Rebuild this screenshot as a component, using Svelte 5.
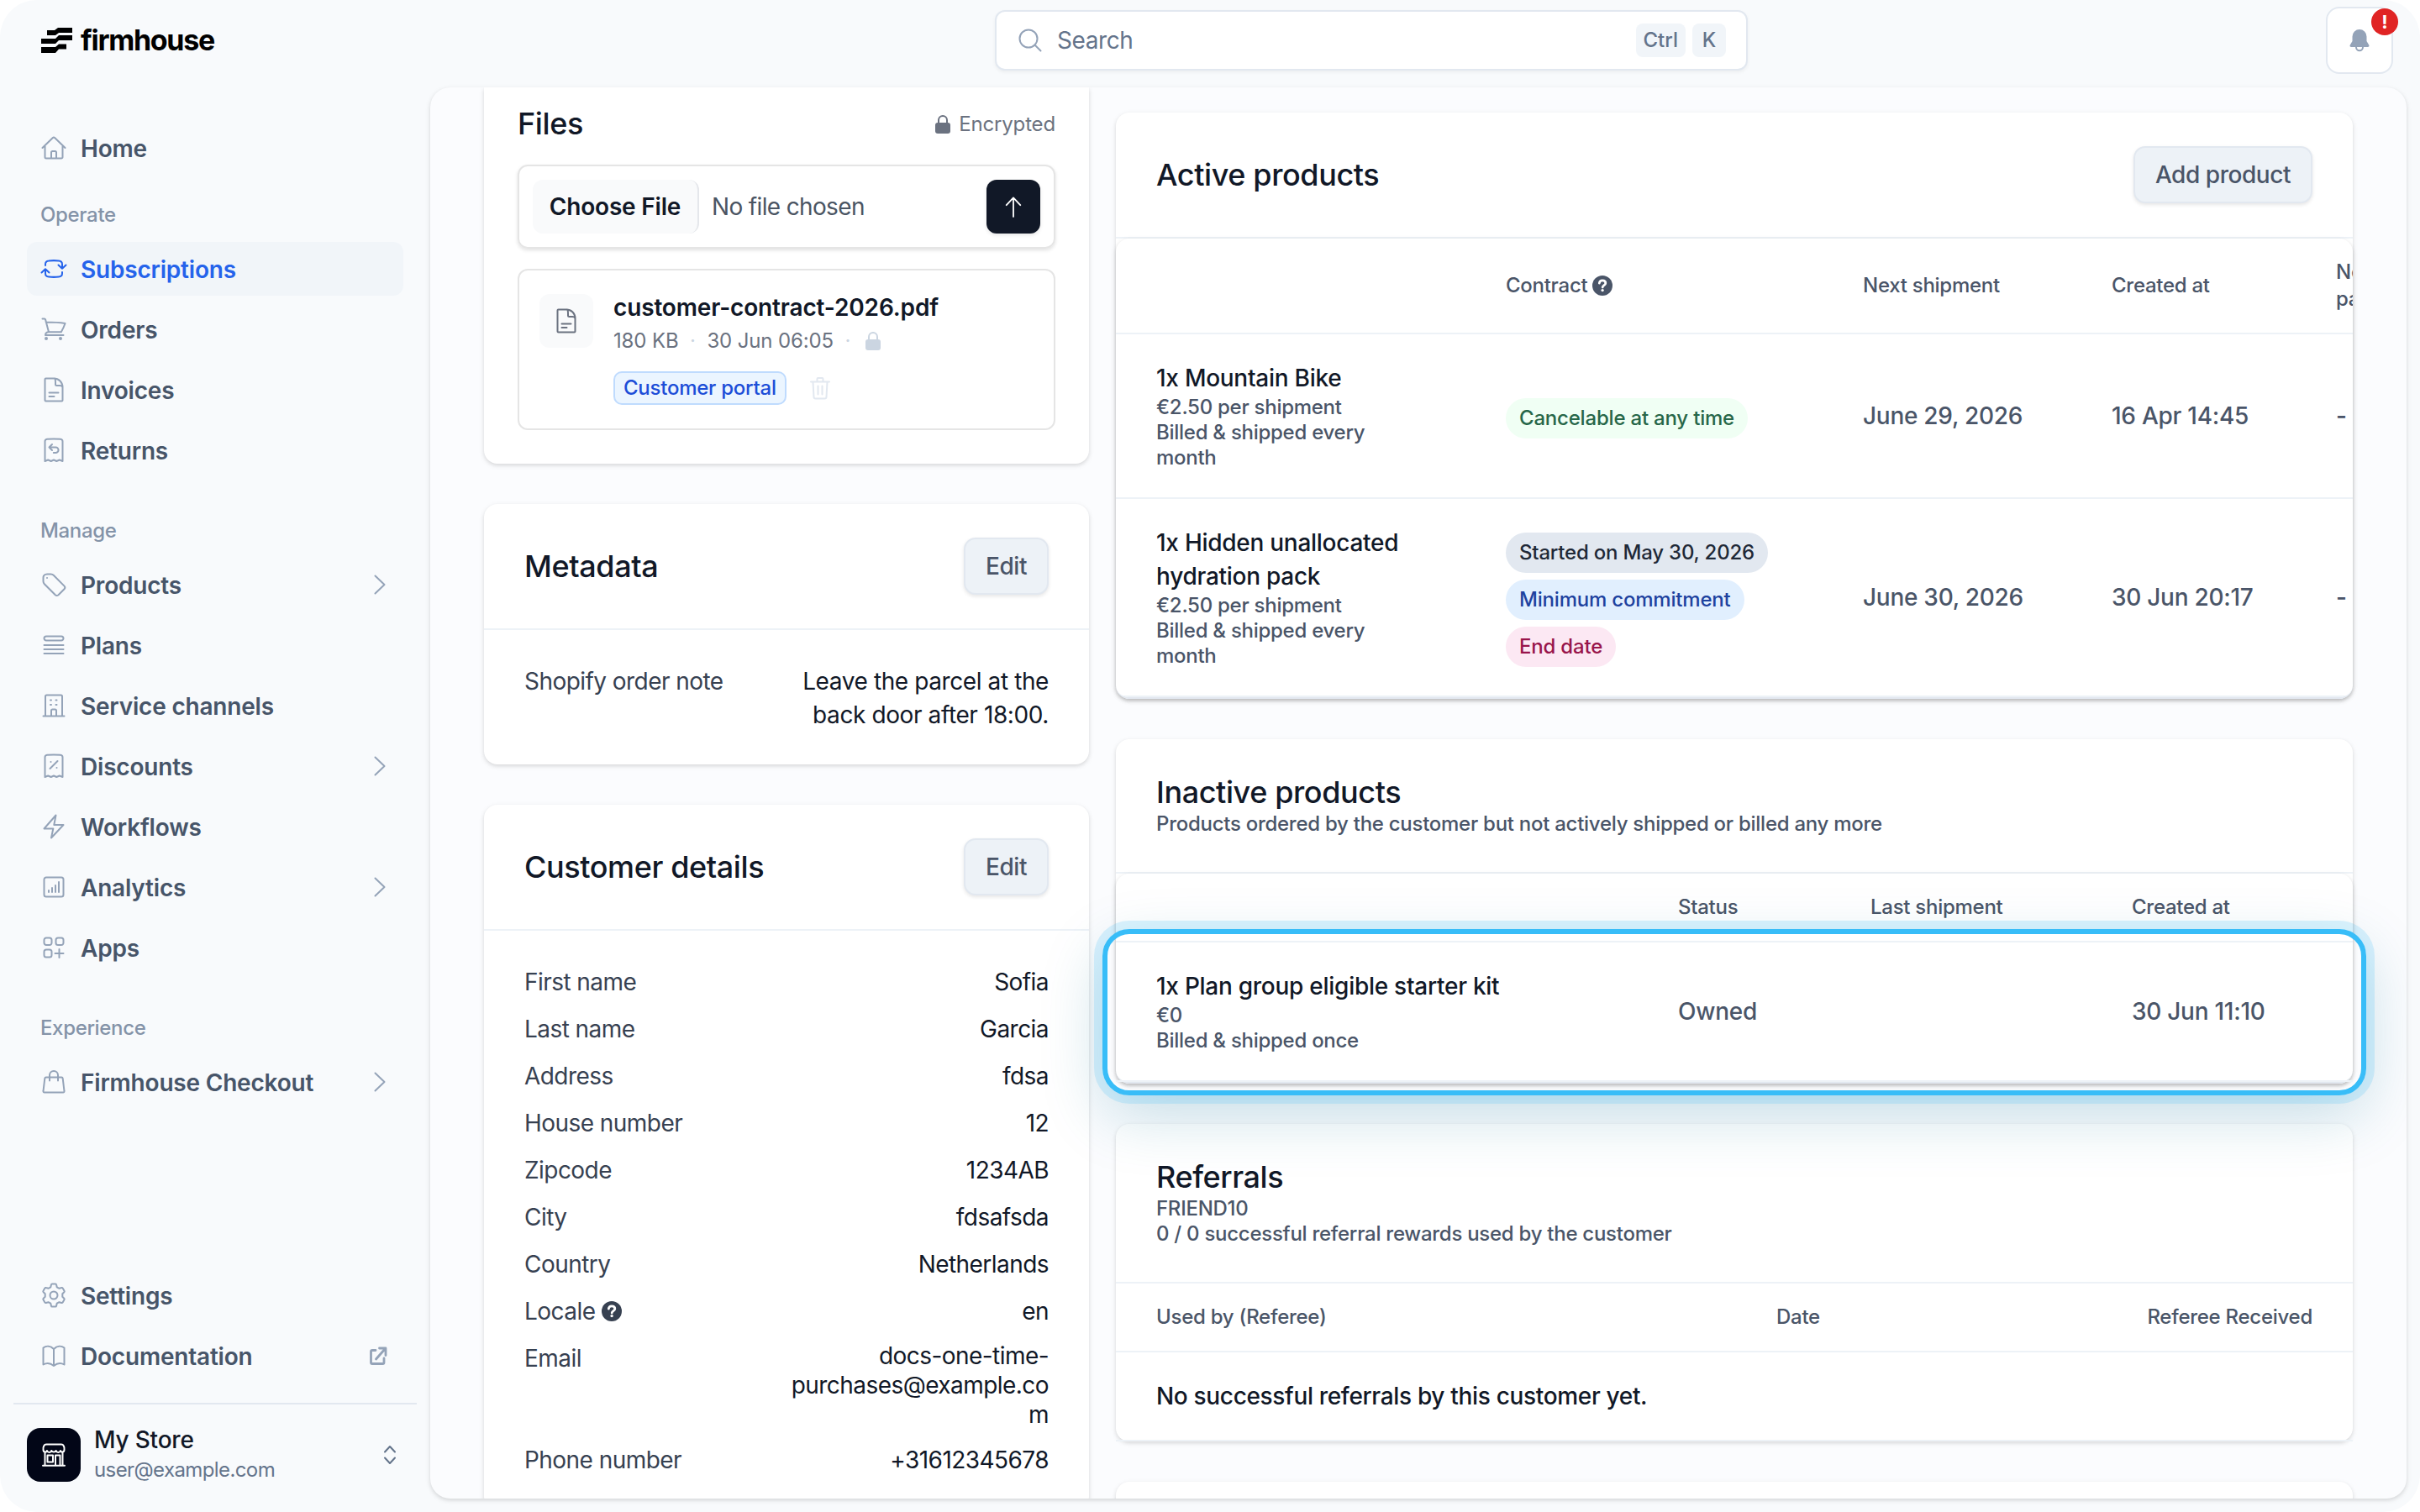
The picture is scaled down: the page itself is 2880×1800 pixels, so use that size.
<script>
  const icons = {
    home: "M2.5 16 14.6 4.2a2 2 0 0 1 2.8 0L29.5 16M5.5 13.2V27A1.5 1.5 0 0 0 7 28.5h18a1.5 1.5 0 0 0 1.5-1.5V13.2M13 28v-6.5a1.5 1.5 0 0 1 1.5-1.5h3a1.5 1.5 0 0 1 1.5 1.5V28",
    sync: "M6 12v-1.5c0-3 1.8-3.8 4-4 4-.5 8-.5 12 0 2.5.3 4 1.2 4 4v5.3M21.5 11.5 26 15.8l4.5-4.3M26 20v1.5c0 3-1.5 3.8-4 4-4 .5-8 .5-12 0-2.5-.2-4-1-4-4v-5M1.5 20.5 6 16.2l4.5 4.3",
    cart: "M2.5 3.500h2.300c.7 0 1.200.5 1.300 1.100L10 19.300M6.700 7.500c8 0 15.500.3 22.800 1.500-1.200 3.600-2.800 7-4.700 10.300H10a4 4 0 0 0-4 3.700h21.500M8 27a1 1 0 1 1-2 0 1 1 0 0 1 2 0ZM25 27a1 1 0 1 1-2 0 1 1 0 0 1 2 0Z",
    doc: "M16 2.500H6.500a1 1 0 0 0-1 1v25a1 1 0 0 0 1 1h19a1 1 0 0 0 1-1V13C26.500 7 22 2.500 16 2.500ZM17 2.600c1.200.8 1 2.200 1 6.900a1.500 1.500 0 0 0 1.500 1.500h3.500c2 0 3 .5 3.500 2M10.500 19.500h11M10.500 24h6",
    returns: "M5.500 5.500c0-2 1-2.500 2.500-2.700 5.300-.5 10.700-.5 16 0 1.500.2 2.500.7 2.500 2.700V29l-3.700-1.500-3.500 1.500-3.300-1.500-3.300 1.500-3.500-1.500L5.500 29ZM14 9l-3.500 3.500L14 16M10.500 12.500h7.800a3.200 3.200 0 0 1 0 6.500h-2.500",
    tag: "M4 5.500C5 3.700 6 3.500 8 3.500h4.500c1.500 0 2.300.4 3.200 1.300L28.500 17.600c1.300 1.300 1.300 2.200 0 3.600l-7 7c-1.400 1.200-2.400 1.200-3.700 0L4.800 15.200C3.900 14.300 3.500 13.500 3.500 12V8c0-1 .1-1.700.5-2.500ZM8 8h.02",
    plans: "M7 5.500h18a2.500 2.500 0 0 1 0 5H7a2.500 2.500 0 0 1 0-5ZM4.500 16h23M4.500 21h23M4.500 26h23",
    building: "M3.500 28.500h25M6 28V5a1.500 1.500 0 0 1 1.500-1.500h17A1.500 1.500 0 0 1 26 5v23M13 28v-6a1.500 1.500 0 0 1 1.500-1.500h3A1.500 1.500 0 0 1 19 22v6M12 9.500h1M12 15h1M18.500 9.500h1M18.500 15h1",
    discount: "M5.500 5.500c0-2 1-2.500 2.500-2.700 5.300-.5 10.700-.5 16 0 1.500.2 2.500.7 2.500 2.700V29l-3.700-1.500-3.500 1.500-3.300-1.500-3.300 1.500-3.500-1.500L5.500 29ZM11.500 19l9-9M12.500 11h.02M19.500 18h.02",
    bolt: "M18.500 2.500 4.500 18.500h10.800L13 29.500l14.500-15.500H16.300Z",
    chart: "M7 4.500h18A2.500 2.500 0 0 1 27.500 7v18a2.500 2.500 0 0 1-2.500 2.500H7A2.500 2.500 0 0 1 4.500 25V7A2.500 2.500 0 0 1 7 4.500ZM10 20v2M14 17v5M18 14v8M22 10v12",
    apps: "M7 4.500h4A2.500 2.500 0 0 1 13.500 7v3.500A2.500 2.500 0 0 1 11 13H7a2.500 2.500 0 0 1-2.500-2.500V7A2.500 2.500 0 0 1 7 4.500ZM21 4.500h4A2.500 2.500 0 0 1 27.500 7v3.500A2.500 2.500 0 0 1 25 13h-4a2.500 2.500 0 0 1-2.500-2.500V7A2.500 2.500 0 0 1 21 4.500ZM7 18.500h4a2.500 2.500 0 0 1 2.500 2.500v4a2.500 2.500 0 0 1-2.500 2.500H7A2.500 2.500 0 0 1 4.500 25v-4A2.500 2.500 0 0 1 7 18.500ZM22.500 18v10M17.500 23h10",
    bag: "M6.800 10.500h18.400a1.500 1.500 0 0 1 1.500 1.300L28.500 27a1.300 1.300 0 0 1-1.300 1.500H4.800A1.300 1.300 0 0 1 3.500 27L5.300 11.800a1.500 1.500 0 0 1 1.500-1.300ZM11 14.500V8a5 5 0 0 1 10 0v6.500",
    gear: "M14 2.500h4c.6 0 1 .4 1.100 1l.6 2.800 2.800 1.500 2.700-.8c.6-.2 1.100 0 1.400.5l1.900 3.300c.3.500.2 1.100-.2 1.500l-2 1.900v3.600l2 1.900c.4.4.5 1 .2 1.500l-1.900 3.300c-.3.5-.8.7-1.400.5l-2.700-.8-2.800 1.500-.6 2.800c-.1.6-.5 1-1.100 1h-4c-.6 0-1-.4-1.100-1l-.6-2.800-2.800-1.500-2.700.8c-.6.2-1.100 0-1.400-.5l-1.900-3.300c-.3-.5-.2-1.100.2-1.500l2-1.900v-3.600l-2-1.900c-.4-.4-.5-1-.2-1.500l1.900-3.300c.3-.5.8-.7 1.400-.5l2.700.8 2.800-1.500.6-2.800c.1-.6.5-1 1.100-1ZM20.500 16a4.500 4.500 0 1 1-9 0 4.500 4.500 0 0 1 9 0Z",
    book: "M16 8C12 4 7 4 3.500 6.500v20C7 24.500 12 24.500 16 28c4-3.500 9-3.500 12.500-1.500v-20C25 4 20 4 16 8ZM16 8v20",
  };

  const groups = [
    { items: [{ label: "Home", icon: "home" }] },
    {
      title: "Operate",
      items: [
        { label: "Subscriptions", icon: "sync", active: true },
        { label: "Orders", icon: "cart" },
        { label: "Invoices", icon: "doc" },
        { label: "Returns", icon: "returns" },
      ],
    },
    {
      title: "Manage",
      items: [
        { label: "Products", icon: "tag", more: true },
        { label: "Plans", icon: "plans" },
        { label: "Service channels", icon: "building" },
        { label: "Discounts", icon: "discount", more: true },
        { label: "Workflows", icon: "bolt" },
        { label: "Analytics", icon: "chart", more: true },
        { label: "Apps", icon: "apps" },
      ],
    },
    {
      title: "Experience",
      items: [{ label: "Firmhouse Checkout", icon: "bag", more: true }],
    },
  ];

  const customer = [
    { label: "First name", value: "Sofia" },
    { label: "Last name", value: "Garcia" },
    { label: "Address", value: "fdsa" },
    { label: "House number", value: "12" },
    { label: "Zipcode", value: "1234AB" },
    { label: "City", value: "fdsafsda" },
    { label: "Country", value: "Netherlands" },
    { label: "Locale", value: "en", help: true },
    { label: "Email", value: "docs-one-time-\npurchases@example.co\nm" },
    { label: "Phone number", value: "+31612345678" },
  ];

  const activeProducts = [
    {
      name: "1x Mountain Bike",
      pills: [{ text: "Cancelable at any time", tone: "green" }],
      next: "June 29, 2026",
      created: "16 Apr 14:45",
    },
    {
      name: "1x Hidden unallocated hydration pack",
      pills: [
        { text: "Started on May 30, 2026", tone: "gray" },
        { text: "Minimum commitment", tone: "blue" },
        { text: "End date", tone: "pink" },
      ],
      next: "June 30, 2026",
      created: "30 Jun 20:17",
    },
  ];
</script>

{#snippet icon(name)}
  <svg class="icon" viewBox="0 0 32 32"><path d={icons[name]} /></svg>
{/snippet}

{#snippet help()}
  <svg class="help" viewBox="0 0 24 24">
    <circle cx="12" cy="12" r="12" />
    <path d="M8.300 9.200C8.500 7 10 5.800 12 5.800c2.200 0 3.800 1.300 3.800 3.200 0 2.600-3.600 2.600-3.600 5" />
    <circle class="dot" cx="12.100" cy="17.600" r="1.700" />
  </svg>
{/snippet}

{#snippet lock()}
  <svg class="lock" viewBox="0 0 18 22">
    <rect x="0" y="9" width="18" height="13" rx="3" />
    <path d="M4 10V6a5 5 0 0 1 10 0v4" />
  </svg>
{/snippet}

<div class="app">
  <aside class="sidebar">
    <div class="logo">
      <svg viewBox="0 0 37 30">
        <path d="M7 3h9l4-3h17v6H21l-4 3H7ZM0 13h17l4-4h16v6H21l-4 4H0ZM0 23h17l4-3.500h9v6h-9l-4 4.500H0Z" />
      </svg>
      <span>firmhouse</span>
    </div>

    <nav>
      {#each groups as group}
        <div class="group">
          {#if group.title}<div class="group-title">{group.title}</div>{/if}
          {#each group.items as item}
            <div class="item" class:active={item.active}>
              {@render icon(item.icon)}
              <span>{item.label}</span>
              {#if item.more}
                <svg class="chevron" viewBox="0 0 14 24"><path d="M1.500 1.500 12.500 12l-11 10.500" /></svg>
              {/if}
            </div>
          {/each}
        </div>
      {/each}
    </nav>

    <div class="bottom">
      <div class="item">{@render icon("gear")}<span>Settings</span></div>
      <div class="item">
        {@render icon("book")}<span>Documentation</span>
        <svg class="external" viewBox="0 0 22 22">
          <path d="M8 4.500H4A1.500 1.500 0 0 0 2.500 6v13A1.500 1.500 0 0 0 4 20.500h12.500A1.500 1.500 0 0 0 18 19v-5M8.500 15 19.500 2.500M12.500 2H20v8.500" />
        </svg>
      </div>
    </div>

    <div class="store">
      <div class="avatar">
        <svg viewBox="0 0 28 28">
          <path d="M5 1.500h18c2.500 0 4 3 3.500 6.500 0 3-4 3.500-4.500 1-1 2.500-4.500 2.500-5.300 0-1 2-4.400 2-5.400 0-.8 2.500-4.300 2.500-5.300 0C5.500 11.500 1.500 11 1.500 8 1 4.500 2.500 1.500 5 1.500ZM3.500 11v15.500M24.500 11v15.500M1 26.700h26M6.500 14.500H13v8H6.500ZM16 26v-11.500h5.500V26" />
        </svg>
      </div>
      <div class="who">
        <div class="store-name">My Store</div>
        <div class="store-mail">user@example.com</div>
      </div>
      <svg class="updown" viewBox="0 0 16 24"><path d="M2 8.500 8 2l6 6.500M2 15.500 8 22l6-6.500" /></svg>
    </div>
  </aside>

  <div class="main">
    <header>
      <div class="search">
        <svg class="glass" viewBox="0 0 28 28"><circle cx="12" cy="12" r="10.500" /><path d="m19.500 19.500 7 7" /></svg>
        <span class="placeholder">Search</span>
        <kbd>Ctrl</kbd>
        <kbd class="key">K</kbd>
      </div>
      <div class="bell">
        <svg viewBox="0 0 24 28">
          <path d="M12 1a8.500 8.500 0 0 0-8.500 8.500V15L.8 19.500c-.7 1.200 0 2.500 1.400 2.500h19.600c1.400 0 2.100-1.300 1.400-2.500L20.500 15V9.500A8.500 8.500 0 0 0 12 1Z" />
          <path class="clapper" d="M8 22a4 4.300 0 0 0 8 0" />
        </svg>
        <span class="badge">!</span>
      </div>
    </header>

    <div class="panel">
      <div class="left">
        <section class="card files">
          <div class="files-head">
            <h2>Files</h2>
            <div class="encrypted">{@render lock()}<span>Encrypted</span></div>
          </div>
          <div class="upload">
            <div class="choose">Choose File</div>
            <span class="none">No file chosen</span>
            <div class="send">
              <svg viewBox="0 0 24 28"><path d="M12 27V3M3 12l9-9.500 9 9.500" /></svg>
            </div>
          </div>
          <div class="file">
            <div class="file-icon">{@render icon("doc")}</div>
            <div>
              <div class="file-name">customer-contract-2026.pdf</div>
              <div class="file-meta">
                <span>180 KB</span><i>·</i><span>30 Jun 06:05</span><i>·</i>{@render lock()}
              </div>
              <div class="file-tags">
                <span class="portal">Customer portal</span>
                <svg class="trash" viewBox="0 0 24 28">
                  <path d="M1 6.500h22M8.500 6V3a1 1 0 0 1 1-1h5a1 1 0 0 1 1 1v3M3.500 7l1 17.500a2 2 0 0 0 2 2h11a2 2 0 0 0 2-2L20.500 7M9.500 11.500v10M14.500 11.500v10" />
                </svg>
              </div>
            </div>
          </div>
        </section>

        <section class="card">
          <div class="card-head"><h2>Metadata</h2><button>Edit</button></div>
          <div class="rows">
            <div class="row">
              <span class="label">Shopify order note</span>
              <span class="note">{"Leave the parcel at the\nback door after 18:00."}</span>
            </div>
          </div>
        </section>

        <section class="card">
          <div class="card-head"><h2>Customer details</h2><button>Edit</button></div>
          <div class="rows">
            {#each customer as field}
              <div class="row">
                <span class="label">{field.label}{#if field.help}{@render help()}{/if}</span>
                <span class="value" class:long={field.label === "Email"}>{field.value}</span>
              </div>
            {/each}
          </div>
        </section>
      </div>

      <div class="right">
        <section class="card">
          <div class="card-head"><h2>Active products</h2><button>Add product</button></div>
          <div class="table">
            <div class="thead active-cols">
              <span></span>
              <span>Contract{@render help()}</span>
              <span>Next shipment</span>
              <span>Created at</span>
              <span>Next payment</span>
            </div>
            {#each activeProducts as product}
              <div class="tr active-cols">
                <div class="product">
                  <div class="name">{product.name}</div>
                  <div class="sub">€2.50 per shipment</div>
                  <div class="sub">Billed &amp; shipped every month</div>
                </div>
                <div class="pills">
                  {#each product.pills as pill}
                    <span class="pill {pill.tone}">{pill.text}</span>
                  {/each}
                </div>
                <span>{product.next}</span>
                <span>{product.created}</span>
                <span>-</span>
              </div>
            {/each}
          </div>
        </section>

        <section class="card">
          <div class="card-head stacked">
            <h2>Inactive products</h2>
            <div class="sub">Products ordered by the customer but not actively shipped or billed any more</div>
          </div>
          <div class="table open">
            <div class="thead inactive-cols">
              <span></span>
              <span>Status</span>
              <span>Last shipment</span>
              <span>Created at</span>
            </div>
            <div class="tr inactive-cols spotlight">
              <div>
                <div class="name">1x Plan group eligible starter kit</div>
                <div class="sub">€0</div>
                <div class="sub">Billed &amp; shipped once</div>
              </div>
              <span>Owned</span>
              <span></span>
              <span>30 Jun 11:10</span>
            </div>
          </div>
        </section>

        <section class="card">
          <div class="card-head stacked">
            <h2>Referrals</h2>
            <div class="sub">FRIEND10</div>
            <div class="sub">0 / 0 successful referral rewards used by the customer</div>
          </div>
          <div class="thead referral-cols">
            <span>Used by (Referee)</span>
            <span>Date</span>
            <span>Referee Received</span>
          </div>
          <div class="tr empty">No successful referrals by this customer yet.</div>
        </section>

        <section class="card next"></section>
      </div>
    </div>
  </div>
</div>

<style>
  :global(body) {
    background: #ffffff;
  }
  .app {
    display: flex;
    width: 2880px;
    height: 1800px;
    overflow: hidden;
    border-radius: 44px;
    background: #f8fafc;
    color: #111827;
    font-family: Inter, "Liberation Sans", sans-serif;
    font-size: 28px;
    line-height: 40px;
  }
  .app :global(*) {
    box-sizing: border-box;
  }
  svg {
    display: block;
    flex: none;
    fill: none;
    stroke: currentColor;
    stroke-width: 2;
    stroke-linecap: round;
    stroke-linejoin: round;
  }
  h2 {
    margin: 0;
    font-size: 36px;
    font-weight: 500;
    line-height: 46px;
    letter-spacing: -0.4px;
  }

  /* sidebar */
  .sidebar {
    display: flex;
    flex-direction: column;
    flex: none;
    width: 512px;
    padding: 24px 16px 20px;
  }
  .logo {
    display: flex;
    align-items: center;
    gap: 10px;
    height: 48px;
    padding-left: 33px;
    color: #000000;
    font-size: 34px;
    font-weight: 700;
    letter-spacing: -1.3px;
  }
  .logo svg {
    width: 37px;
    height: 30px;
    fill: currentColor;
    stroke: none;
  }
  nav {
    padding: 72px 16px 0;
  }
  .group {
    display: flex;
    flex-direction: column;
    gap: 8px;
    margin-bottom: 44px;
  }
  .group:first-child {
    margin-bottom: 28px;
  }
  .group-title {
    height: 40px;
    margin-bottom: 4px;
    padding-left: 16px;
    color: #8493a8;
    font-size: 24px;
    font-weight: 500;
    letter-spacing: -0.35px;
  }
  .item {
    display: flex;
    align-items: center;
    gap: 16px;
    height: 64px;
    padding: 0 16px;
    border-radius: 12px;
    color: #475569;
    font-weight: 600;
    letter-spacing: -0.2px;
  }
  .item span {
    flex: 1;
    padding-top: 1px;
  }
  .item .icon {
    color: #94a3b8;
  }
  .item.active,
  .item.active .icon {
    background: #f1f5f9;
    color: #2563eb;
  }
  .icon {
    width: 32px;
    height: 32px;
  }
  .chevron {
    width: 14px;
    height: 24px;
    margin-right: 5px;
    color: #94a3b8;
  }
  .external {
    width: 22px;
    height: 22px;
    margin-right: 3px;
    color: #94a3b8;
    stroke-width: 2.8;
  }
  .bottom {
    display: flex;
    flex-direction: column;
    gap: 8px;
    margin-top: auto;
    padding: 0 16px 24px;
  }
  .store {
    display: flex;
    align-items: center;
    padding: 24px 24px 12px 16px;
    border-top: 2px solid #e2e8f0;
  }
  .avatar {
    display: flex;
    align-items: center;
    justify-content: center;
    width: 64px;
    height: 64px;
    border-radius: 16px;
    background: #020617;
    color: #ffffff;
  }
  .avatar svg {
    width: 28px;
    height: 28px;
  }
  .who {
    flex: 1;
    padding-left: 16px;
    line-height: 36px;
  }
  .store-name {
    font-weight: 500;
    letter-spacing: -0.2px;
  }
  .store-mail {
    color: #64748b;
    font-size: 24px;
    letter-spacing: -0.6px;
  }
  .updown {
    width: 16px;
    height: 24px;
    color: #64748b;
  }

  /* top bar */
  .main {
    display: flex;
    flex-direction: column;
    flex: 1;
    padding: 0 16px 16px 0;
  }
  header {
    display: grid;
    grid-template-columns: 896px 1fr;
    flex: none;
    height: 104px;
    padding: 8px 16px 16px 672px;
  }
  .search {
    display: flex;
    align-items: center;
    height: 72px;
    margin-top: 4px;
    padding: 0 24px 0 26px;
    border: 2px solid #e2e8f0;
    border-radius: 12px;
    background: #ffffff;
    box-shadow: 0 2px 4px rgba(0, 0, 0, 0.05);
    color: #64748b;
  }
  .glass {
    width: 28px;
    height: 28px;
    color: #94a3b8;
  }
  .placeholder {
    flex: 1;
    padding-left: 18px;
    letter-spacing: -0.4px;
  }
  kbd {
    height: 40px;
    margin-left: 8px;
    padding: 0 9px;
    border-radius: 8px;
    background: #f1f5f9;
    font-family: inherit;
    font-size: 24px;
    font-weight: 500;
  }
  .key {
    width: 40px;
    padding: 0;
    text-align: center;
  }
  .bell {
    position: relative;
    display: flex;
    align-items: center;
    justify-content: center;
    justify-self: end;
    width: 80px;
    height: 80px;
    border: 2px solid #e2e8f0;
    border-radius: 16px;
    background: #ffffff;
    color: #94a3b8;
  }
  .bell svg {
    width: 24px;
    height: 28px;
    fill: currentColor;
    stroke: none;
  }
  .bell .clapper {
    fill: none;
    stroke: currentColor;
  }
  .badge {
    position: absolute;
    top: 0;
    right: -8px;
    width: 32px;
    height: 32px;
    border-radius: 50%;
    background: #e02424;
    color: #ffffff;
    font-size: 22px;
    font-weight: 700;
    line-height: 32px;
    text-align: center;
  }

  /* content panel */
  .panel {
    display: flex;
    gap: 32px;
    flex: 1;
    min-height: 0;
    overflow: hidden;
    padding: 0 64px;
    border-radius: 24px;
    background: #fbfcfe;
    box-shadow: 0 2px 6px rgba(0, 0, 0, 0.1), 0 2px 4px rgba(0, 0, 0, 0.06);
  }
  .left,
  .right {
    display: flex;
    flex-direction: column;
    gap: 48px;
  }
  .left {
    width: 720px;
  }
  .right {
    width: 1472px;
    padding-top: 30px;
  }
  .card {
    flex: none;
    border-radius: 16px;
    background: #ffffff;
    box-shadow: 0 2px 6px rgba(0, 0, 0, 0.1), 0 2px 4px rgba(0, 0, 0, 0.06);
  }
  .card-head {
    display: flex;
    align-items: center;
    justify-content: space-between;
    height: 150px;
    padding: 0 48px;
    border-bottom: 2px solid #edf2f7;
  }
  .card-head.stacked {
    display: block;
    height: auto;
    padding: 40px 48px 42px;
  }
  button {
    height: 68px;
    padding: 0 24px;
    border: 2px solid #e2e8f0;
    border-radius: 14px;
    background: #edf2f7;
    box-shadow: 0 2px 4px rgba(0, 0, 0, 0.1);
    color: #4a5568;
    font: inherit;
    font-weight: 500;
    letter-spacing: -0.45px;
  }

  /* files */
  .files {
    padding: 20px 40px 40px;
    border-radius: 0 0 16px 16px;
  }
  .files-head {
    display: flex;
    align-items: center;
    justify-content: space-between;
    margin-bottom: 26px;
  }
  .encrypted {
    display: flex;
    align-items: center;
    gap: 10px;
    padding-top: 1px;
    color: #6b7280;
    font-size: 24px;
    letter-spacing: -0.15px;
  }
  .lock {
    width: 18px;
    height: 22px;
  }
  .lock rect {
    fill: currentColor;
    stroke: none;
  }
  .upload {
    display: flex;
    align-items: center;
    height: 100px;
    margin-bottom: 24px;
    padding: 0 16px;
    border: 2px solid #e5e5e5;
    border-radius: 12px;
    box-shadow: 0 2px 4px rgba(0, 0, 0, 0.12);
  }
  .choose {
    width: 198px;
    height: 64px;
    border-right: 2px solid #e5e7eb;
    border-radius: 12px;
    background: #f9fafb;
    font-weight: 600;
    letter-spacing: -0.2px;
    line-height: 64px;
    text-align: center;
    white-space: nowrap;
  }
  .none {
    flex: 1;
    padding-left: 15px;
    color: #4b5563;
    letter-spacing: -0.65px;
  }
  .send {
    display: flex;
    align-items: center;
    justify-content: center;
    width: 64px;
    height: 64px;
    border-radius: 12px;
    background: #111827;
    box-shadow: 0 2px 4px rgba(0, 0, 0, 0.1);
    color: #ffffff;
  }
  .send svg {
    width: 22px;
    height: 26px;
  }
  .file {
    display: flex;
    gap: 24px;
    height: 192px;
    padding: 23px 24px;
    border: 2px solid #e5e5e5;
    border-radius: 12px;
  }
  .file-icon {
    display: flex;
    align-items: center;
    justify-content: center;
    width: 64px;
    height: 64px;
    margin-top: 5px;
    border-radius: 12px;
    background: #f9fafb;
    color: #6b7280;
  }
  .file-name {
    font-weight: 600;
    letter-spacing: -0.15px;
    line-height: 42px;
  }
  .file-meta {
    display: flex;
    align-items: center;
    height: 38px;
    color: #6b7280;
    font-size: 24px;
    letter-spacing: -0.15px;
  }
  .file-meta i {
    width: 34px;
    color: #cbd5e1;
    font-style: normal;
    text-align: center;
  }
  .file-meta .lock {
    margin-left: 4px;
    color: #cbd5e1;
  }
  .file-tags {
    display: flex;
    align-items: center;
    gap: 28px;
    margin-top: 17px;
  }
  .portal {
    height: 40px;
    padding: 0 10px;
    border: 2px solid #bfdbfe;
    border-radius: 10px;
    background: #ebf5ff;
    color: #1d4ed8;
    font-size: 24px;
    font-weight: 500;
    letter-spacing: -0.25px;
    line-height: 36px;
  }
  .trash {
    width: 24px;
    height: 28px;
    color: #e2e8f0;
  }

  /* label / value rows */
  .rows {
    display: flex;
    flex-direction: column;
    gap: 16px;
    padding: 41px 48px 39px;
    letter-spacing: -0.55px;
  }
  .row {
    display: flex;
    justify-content: space-between;
  }
  .label {
    display: flex;
    align-items: center;
    height: 40px;
    color: #374151;
  }
  .note,
  .value {
    text-align: right;
    white-space: pre-line;
  }
  .note {
    letter-spacing: -0.4px;
  }
  .long {
    line-height: 35px;
  }
  .help {
    width: 24px;
    height: 24px;
    margin-left: 8px;
    fill: currentColor;
    stroke: none;
  }
  .help path {
    fill: none;
    stroke: #ffffff;
    stroke-width: 2.8;
  }
  .help .dot {
    fill: #ffffff;
  }

  /* tables */
  .table {
    overflow: hidden;
    border-bottom: 2px solid #e2e8f0;
    border-radius: 16px;
    box-shadow: 0 2px 6px rgba(0, 0, 0, 0.1), 0 2px 4px rgba(0, 0, 0, 0.08);
  }
  .table.open {
    overflow: visible;
  }
  .thead,
  .tr {
    display: grid;
    align-items: center;
    padding-left: 48px;
    border-bottom: 2px solid #edf2f7;
    color: #4a5568;
    font-weight: 500;
    letter-spacing: -0.27px;
  }
  .thead {
    min-height: 82px;
    padding-top: 24px;
    padding-bottom: 24px;
    font-size: 24px;
    line-height: 32px;
  }
  .thead span {
    display: flex;
    align-items: center;
  }
  .thead .help {
    margin-left: 6px;
  }
  .tr {
    position: relative;
    padding-top: 32px;
    padding-bottom: 32px;
  }
  .active-cols {
    grid-template-columns: 416px 425px 296px 267px 90px;
  }
  .inactive-cols {
    grid-template-columns: 621px 229px 311px 1fr;
  }
  .referral-cols {
    grid-template-columns: 738px 1fr auto;
    padding-right: 48px;
  }
  .product {
    width: 300px;
  }
  .name {
    color: #111827;
  }
  .sub {
    color: #4a5568;
    font-size: 24px;
    font-weight: 500;
    letter-spacing: -0.27px;
    line-height: 30px;
  }
  .pills {
    display: flex;
    flex-direction: column;
    align-items: flex-start;
    gap: 8px;
    padding-top: 5px;
  }
  .pill {
    height: 48px;
    padding: 0 16px;
    border-radius: 24px;
    font-size: 24px;
    letter-spacing: -0.2px;
    line-height: 48px;
  }
  .green {
    background: #f0fff4;
    color: #276749;
  }
  .gray {
    background: #e2e8f0;
    color: #1f2937;
  }
  .blue {
    background: #e1effe;
    color: #1e429f;
  }
  .pink {
    background: #fce8f3;
    color: #99154b;
  }
  .empty {
    color: #111827;
    letter-spacing: -0.33px;
  }
  .next {
    height: 200px;
  }

  /* highlighted row */
  .spotlight::after {
    content: "";
    position: absolute;
    z-index: 2;
    inset: -16px -16px -18px;
    border: 6px solid #38bdf8;
    border-radius: 32px;
    box-shadow: 0 0 0 10px rgba(56, 189, 248, 0.18), 0 24px 72px rgba(14, 116, 144, 0.22);
  }
</style>
